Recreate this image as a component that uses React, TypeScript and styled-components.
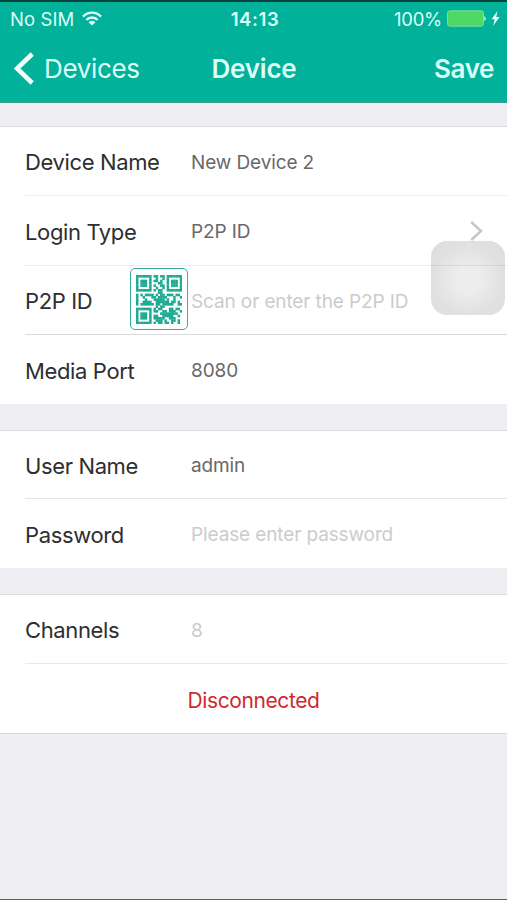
import React from "react";
import styled, { createGlobalStyle } from "styled-components";

const GlobalStyle = createGlobalStyle`
  * { box-sizing: border-box; }
  html, body { margin: 0; padding: 0; background: #eeeef3; }
  body { font-family: Inter, "Liberation Sans", sans-serif; overflow: hidden; }
`;

const Screen = styled.main`
  position: relative;
  display: flex;
  flex-direction: column;
  width: 507px;
  height: 900px;
  background: #eeeef3;
  border-top: 2px solid #07453b;
  border-bottom: 1px solid #5d5d61;
  overflow: hidden;
`;

const Header = styled.header`
  height: 101px;
  background: #02b199;
  border-bottom: 1px solid #3c9c8e;
  color: #dcfff8;
`;

const StatusBar = styled.div`
  display: grid;
  grid-template-columns: 1fr auto 1fr;
  align-items: center;
  height: 32px;
  padding: 0 7px 0 10px;
  font-size: 18.5px;
  line-height: 32px;
`;

const StatusGroup = styled.div<{ $end?: boolean }>`
  display: flex;
  align-items: center;
  justify-content: ${(p) => (p.$end ? "flex-end" : "flex-start")};
`;

const Carrier = styled.span`
  padding-top: 1px;
  letter-spacing: 0.1px;
  margin-right: 8px;
`;

const Clock = styled.span`
  padding-top: 1px;
  font-weight: 600;
  letter-spacing: 0.6px;
`;

const Percent = styled.span`
  padding-top: 1px;
  letter-spacing: -0.25px;
  margin-right: 5px;
`;

const NavBar = styled.nav`
  display: grid;
  grid-template-columns: 1fr auto 1fr;
  align-items: center;
  height: 68px;
  padding: 0 13px 0 14px;
  line-height: 69px;
`;

const BackButton = styled.a`
  display: flex;
  align-items: center;
  gap: 10px;
  font-size: 26px;
  letter-spacing: -0.35px;
`;

const Title = styled.h1`
  margin: 0;
  font-size: 26px;
  font-weight: 600;
  letter-spacing: -0.2px;
`;

const SaveButton = styled.a`
  justify-self: end;
  font-size: 26px;
  font-weight: 600;
  letter-spacing: -0.4px;
`;

const Form = styled.form`
  display: flex;
  flex-direction: column;
  gap: 26px;
  padding-top: 23px;
`;

const Section = styled.section<{ $closed?: boolean }>`
  background: #fff;
  border-top: 1px solid #dedee2;
  border-bottom: ${(p) => (p.$closed ? "1px solid #d8d8dc" : "0")};
`;

const Row = styled.div<{ $h?: number; $line?: string }>`
  position: relative;
  display: grid;
  grid-template-columns: 166px 1fr auto;
  align-items: center;
  height: ${(p) => p.$h ?? 69}px;
  margin-left: 25px;
  padding-right: 24px;
  border-bottom: ${(p) => (p.$line ? `1px solid ${p.$line}` : "0")};
`;

const Label = styled.label`
  padding-top: 2px;
  font-size: 22px;
  color: #2e2e30;
  letter-spacing: -0.37px;
  white-space: nowrap;
`;

const Value = styled.span<{ $hint?: boolean }>`
  padding-top: 2px;
  font-size: 19px;
  color: ${(p) => (p.$hint ? "#cbcbcf" : "#68686a")};
  letter-spacing: -0.12px;
  white-space: nowrap;
`;

const ScanButton = styled.span`
  position: absolute;
  left: 105px;
  top: 2px;
  display: flex;
  align-items: center;
  justify-content: center;
  width: 58px;
  height: 62px;
  border: 1px solid #36ac9b;
  border-radius: 5px;
  background: #fcfffe;
`;

const StatusRow = styled(Row)`
  display: flex;
  justify-content: center;
  margin-left: 0;
  padding: 4px 0 0;
`;

const Disconnected = styled.span`
  font-size: 21px;
  letter-spacing: -0.4px;
  color: #d0282d;
`;

const AssistiveTouch = styled.div`
  position: absolute;
  left: 431px;
  top: 239px;
  width: 74px;
  height: 74px;
  border-radius: 16px;
  background: radial-gradient(circle at 50% 53%, rgba(234, 234, 234, 0.88) 0 13px, rgba(228, 228, 228, 0.88) 22px, rgba(220, 220, 220, 0.86) 34px, rgba(216, 216, 216, 0.86) 50px);

  &::after {
    content: "";
    position: absolute;
    left: 0;
    right: 0;
    top: 24px;
    height: 1px;
    background: rgba(120, 120, 120, 0.14);
  }
`;

const qrRows = [
  "#######.##.##.#######",
  "#.....#..#..#.#.....#",
  "#.###.#.##.#..#.###.#",
  "#.###.#...##..#.###.#",
  "#.###.#.#..##.#.###.#",
  "#.....#..#..#.#.....#",
  "#######.#.##..#######",
  "..........##.........",
  "#.#.####.#.##.###.##.",
  "#..#...##.####...#..#",
  "#...#...#####.#..#...",
  "#..####..######.##.#.",
  "#.######.##.#####..##",
  ".........#.##........",
  "#######.#.##...##.##.",
  "#.....#.##..##.###..#",
  "#.###.#....########..",
  "#.###.#.##..#####..#.",
  "#.###.#.#####..###...",
  "#.....#..###.#..##.#.",
  "#######.#.##.##.#..#.",
];

const QrCode = () => (
  <svg width="46" height="49" viewBox="0 0 21 21" preserveAspectRatio="none">
    {qrRows.flatMap((row, y) =>
      [...row].map((c, x) =>
        c === "#" ? <rect key={`${x}-${y}`} x={x} y={y} width="1.12" height="1.12" fill="#1caa93" /> : null
      )
    )}
  </svg>
);

const WifiIcon = () => (
  <svg width="20" height="15" viewBox="0 0 20 15" fill="none" stroke="#dcfff8" strokeWidth="2.3">
    <path d="M1 5.6C6 .4 14 .4 19 5.6" />
    <path d="M4.4 8.9C7.5 5.7 12.5 5.7 15.6 8.9" />
    <path d="M10 14.4 6.6 11.2C8.6 9.4 11.4 9.4 13.4 11.2Z" fill="#dcfff8" stroke="none" />
  </svg>
);

const BatteryIcon = () => (
  <svg width="39" height="17" viewBox="0 0 39 17">
    <rect x=".5" y=".8" width="36" height="15.4" rx="2.5" fill="#4fd964" stroke="#72dfa5" />
    <path d="M37.3 6q1.5 1 1.5 2.5t-1.5 2.5z" fill="#c8fff0" />
  </svg>
);

const BoltIcon = () => (
  <svg width="9" height="15" viewBox="0 0 9 15">
    <path d="M6.5 0 .5 8.3h3.2L2 15 8.6 6.1H5.2z" fill="#e4fffa" />
  </svg>
);

const BackIcon = () => (
  <svg width="20" height="33" viewBox="0 0 20 33" fill="none">
    <path d="M18.2 2 3 16.5 18.2 31" stroke="#f1fffc" strokeWidth="4.6" />
  </svg>
);

const ChevronIcon = () => (
  <svg width="13" height="20" viewBox="0 0 13 20" fill="none">
    <path d="M1.2 1 11 10 1.2 19" stroke="#c5c5c8" strokeWidth="2.4" />
  </svg>
);

const BatterySlot = styled.span`
  display: flex;
  align-items: center;
  gap: 5px;
`;

export default function App() {
  return (
    <>
      <GlobalStyle />
      <Screen>
        <Header>
          <StatusBar>
            <StatusGroup>
              <Carrier>No SIM</Carrier>
              <WifiIcon />
            </StatusGroup>
            <Clock>14:13</Clock>
            <StatusGroup $end>
              <Percent>100%</Percent>
              <BatterySlot>
                <BatteryIcon />
                <BoltIcon />
              </BatterySlot>
            </StatusGroup>
          </StatusBar>
          <NavBar>
            <BackButton>
              <BackIcon />
              Devices
            </BackButton>
            <Title>Device</Title>
            <SaveButton>Save</SaveButton>
          </NavBar>
        </Header>
        <Form>
          <Section>
            <Row $line="#ececee">
              <Label>Device Name</Label>
              <Value>New Device 2</Value>
            </Row>
            <Row $h={70} $line="#ececee">
              <Label>Login Type</Label>
              <Value>P2P ID</Value>
              <ChevronIcon />
            </Row>
            <Row $line="#d9d9db">
              <Label>P2P ID</Label>
              <ScanButton>
                <QrCode />
              </ScanButton>
              <Value $hint>Scan or enter the P2P ID</Value>
            </Row>
            <Row>
              <Label>Media Port</Label>
              <Value>8080</Value>
            </Row>
          </Section>
          <Section>
            <Row $h={68} $line="#e5e5e7">
              <Label>User Name</Label>
              <Value>admin</Value>
            </Row>
            <Row>
              <Label>Password</Label>
              <Value $hint>Please enter password</Value>
            </Row>
          </Section>
          <Section $closed>
            <Row $line="#e8e8ea">
              <Label>Channels</Label>
              <Value $hint>8</Value>
            </Row>
            <StatusRow>
              <Disconnected>Disconnected</Disconnected>
            </StatusRow>
          </Section>
        </Form>
        <AssistiveTouch />
      </Screen>
    </>
  );
}
